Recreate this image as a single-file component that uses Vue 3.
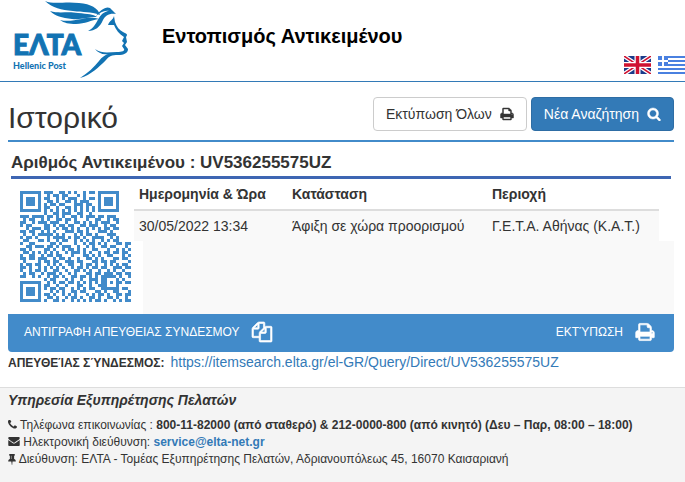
<template>
  <div class="page">
    <!-- Header -->
    <header class="site-header">
      <svg class="logo" viewBox="0 0 130 80" role="img" aria-label="ΕΛΤΑ Hellenic Post">
        <g fill="#1273b3">
          <path d="M45 1C55 5 64 1 79 3C91 4 98 8 100 15C90 11 84 13 73 11C61 10 53 8 45 1Z" />
          <path d="M50 11C60 14 67 11 78 13C88 14 93 14 97 17C87 17 82 20 72 19C62 18 55 16 50 11Z" />
          <path d="M60 20C68 22 74 20 82 19C90 17 95 18 99 19C91 20 85 24 76 24C69 24 64 23 60 20Z" />
          <path d="M96 16C100 10 106 6 110 8L116 14C109 13 105 16 103 20C100 27 95 31 88 31C94 28 96 23 99 18C102 13 106 11 109 11C104 10 100 13 96 16Z" />
          <path d="M108 25C110 20 113 20 114 16L115 22C117 27 119 30 123 32C127 34 128 34 126 37L127 42L125 45L128 49C128 53 124 55 118 55C112 55 109 56 106 60C99 67 91 75 80 78C88 73 94 67 99 61C102 57 105 55 108 54C103 55 98 53 95 49C102 54 109 52 117 52C122 52 125 51 124 49L122 46L124 43L122 41L124 37C119 34 116 30 114 25Z" />
        </g>
        <text class="logo-name" x="13" y="55">ΕΛΤΑ</text>
        <text class="logo-sub" x="13" y="69">Hellenic Post</text>
      </svg>
      <h1 class="site-title">Εντοπισμός Αντικειμένου</h1>
      <nav class="languages">
        <a href="#en" aria-label="English">
          <svg class="flag" viewBox="0 0 27 18">
            <path fill="#1a3a8a" d="M0 0h27v18H0z" />
            <path stroke="#fff" stroke-width="4" d="M0 0L27 18M27 0L0 18" />
            <path stroke="#cf1230" stroke-width="1.500" d="M0 0L27 18M27 0L0 18" />
            <path stroke="#fff" stroke-width="6" d="M13.500 0V18M0 9H27" />
            <path stroke="#cf1230" stroke-width="3.500" d="M13.500 0V18M0 9H27" />
          </svg>
        </a>
        <a href="#el" aria-label="Ελληνικά">
          <svg class="flag" viewBox="0 0 27 18" shape-rendering="crispEdges">
            <path fill="#fff" d="M0 0h27v18H0z" />
            <path fill="#4a80e0" d="M0 0h27v2H0zM0 4h27v2H0zM0 8h27v2H0zM0 12h27v2H0zM0 16h27v2H0z" />
            <path fill="#4a80e0" d="M0 0h10v10H0z" />
            <path fill="#fff" d="M4 0h2v10H4zM0 4h10v2H0z" />
          </svg>
        </a>
      </nav>
    </header>

    <main class="content">
      <!-- Title and actions -->
      <div class="title-row">
        <h2>Ιστορικό</h2>
        <div class="actions">
          <button type="button" class="btn">
            Εκτύπωση Όλων
            <svg class="icon-small" viewBox="0 0 1792 1792"><path :d="icons.print" /></svg>
          </button>
          <button type="button" class="btn btn-primary">
            Νέα Αναζήτηση
            <svg class="icon-small" viewBox="0 0 1792 1792"><path :d="icons.search" /></svg>
          </button>
        </div>
      </div>

      <!-- Item -->
      <h3 class="item-title">Αριθμός Αντικειμένου : {{ itemNumber }}</h3>
      <div class="item-body">
        <svg class="qr" viewBox="0 0 37 37" shape-rendering="crispEdges" role="img" aria-label="QR">
          <path :d="qrPath" />
        </svg>
        <div class="history">
          <table>
            <thead>
              <tr>
                <th class="col-date">Ημερομηνία &amp; Ώρα</th>
                <th class="col-status">Κατάσταση</th>
                <th>Περιοχή</th>
              </tr>
            </thead>
            <tbody>
              <tr v-for="entry in history" :key="entry.date">
                <td>{{ entry.date }}</td>
                <td>{{ entry.status }}</td>
                <td>{{ entry.area }}</td>
              </tr>
            </tbody>
          </table>
          <div class="history-rest"></div>
        </div>
      </div>
      <div class="item-bar">
        <button type="button" class="bar-btn">
          ΑΝΤΙΓΡΑΦΗ ΑΠΕΥΘΕΙΑΣ ΣΥΝΔΕΣΜΟΥ
          <svg class="icon-large" viewBox="0 0 1792 1792"><path :d="icons.copy" /></svg>
        </button>
        <button type="button" class="bar-btn">
          ΕΚΤΎΠΩΣΗ
          <svg class="icon-large" viewBox="0 0 1792 1792"><path :d="icons.print" /></svg>
        </button>
      </div>
      <p class="direct-link">
        <strong>ΑΠΕΥΘΕΊΑΣ ΣΎΝΔΕΣΜΟΣ:</strong>
        <a :href="directUrl">{{ directUrl }}</a>
      </p>
    </main>

    <!-- Customer service -->
    <footer class="site-footer">
      <h4>Υπηρεσία Εξυπηρέτησης Πελατών</h4>
      <p>
        <svg class="icon-phone" viewBox="192 256 1408 1280"><path :d="icons.phone" /></svg>
        Τηλέφωνα επικοινωνίας : <strong>800-11-82000 (από σταθερό) &amp; 212-0000-800 (από κινητό) (Δευ – Παρ, 08:00 – 18:00)</strong>
      </p>
      <p>
        <svg class="icon-mail" viewBox="0 256 1792 1408"><path :d="icons.envelope" /></svg>
        Ηλεκτρονική διεύθυνση: <a href="mailto:service@elta-net.gr"><strong>service@elta-net.gr</strong></a>
      </p>
      <p>
        <svg class="icon-pin" viewBox="320 128 1152 1664"><path :d="icons.pin" /></svg>
        Διεύθυνση: ΕΛΤΑ - Τομέας Εξυπηρέτησης Πελατών, Αδριανουπόλεως 45, 16070 Καισαριανή
      </p>
    </footer>
  </div>
</template>

<script setup>
import { ref, computed } from 'vue';

const itemNumber = ref('UV536255575UZ');

const directUrl = computed(() => `https://itemsearch.elta.gr/el-GR/Query/Direct/${itemNumber.value}`);

// Tracking events of the item
const history = ref([
  { date: '30/05/2022 13:34', status: 'Άφιξη σε χώρα προορισμού', area: 'Γ.Ε.Τ.Α. Αθήνας (Κ.Α.Τ.)' }
]);

// Modules of the QR code, one string per row
const qrRows = [
  '#######.###..##.#.#..#.##.#######....',
  '#.....#..#.##.##...#.#....#.....#....',
  '#.###.#.##..#.#.###..#.##.#.###.#....',
  '#.###.#..##.#..##.#.###...#.###.#....',
  '#.###.#.#.##.##...###.##..#.###.#....',
  '#.....#.##..#..##.#.#.#.#.#.....#....',
  '#######.#.#.#.#.#.#.#.#.#.#######....',
  '........#..##.###..##..#.............',
  '###.####.##.#.#..##.#.###.##.###.....',
  '.#.##..#.#..##.##.#...#..##..#.##....',
  '##..#.###.###..#..##.#.#.#.###..#....',
  '#.##....##.#.##.##..##.###..#.##.....',
  '..#.###.##..#.##.#.#..#.#.#.##.##....',
  '##.##..#.#.#...###.##.#...###.#......',
  '.#..#.#####.#.#...#.#.##.#...###.....',
  '#.##.#...#.####.#.##.#..####..#.#....',
  '.##...##.#..#.##..#.#.#.#..#.#.##....',
  '#..##.....##.#....#..#.##.#.#...##.##',
  '..##.###.##.#.###..#..#.#..##.##...#.',
  '##.#....##.#..#.##.#.#..##...#..#.#.#',
  '.##.#.#.#.#.#..#.###.#.#..#.##.##.##.',
  '#..##..#.##.##...#...##.#.#..##...#.#',
  '##.##.###..#.##.#..#..##.#.#...##.##.',
  '.#....#.##.##..###.##...##.##.##....#',
  '#.##.##..#.#.#..##..#.##.#..#.#.#.##.',
  '##.#..#.#.#.#.#..#.##.#.##.##..###.##',
  '#..#.##.#..##..#..##.#.#..#..#.#..#..',
  '.#.##..#.###.#..#.#...##.##.###.##.##',
  '##..#.#..#.##.#..##.##.#.#.#####.#..#',
  '........#.##...#.#..#..###.##...#.#..',
  '#######..#.#.##.##.#.#.#.#.##.#.##.##',
  '#.....#.##..#..#...##..#..###...#....',
  '#.###.#.#.##.##..#.#.#.##..######.##.',
  '#.###.#...#.#.#..##.##...##.#..##...#',
  '#.###.#.##.#..#.#.#...#.#.##.#..##.##',
  '#.....#..##.#..#.##.#..##.#..##.#..#.',
  '#######.#..##.#..#.#.#.#.##.#..#.#.##'
];

const qrPath = qrRows
  .map((row, y) => [...row].map((cell, x) => (cell === '#' ? `M${x} ${y}h1v1h-1z` : '')).join(''))
  .join('');

const icons = {
  print: 'M448 1536h896v-256h-896v256zm0-640h896v-384h-160q-40 0-68-28t-28-68v-160h-640v640zm1152 64q0-26-19-45t-45-19-45 19-19 45 19 45 45 19 45-19 19-45zm128 0v416q0 13-9.500 22.500t-22.500 9.500h-224v160q0 40-28 68t-68 28h-960q-40 0-68-28t-28-68v-160h-224q-13 0-22.500-9.500t-9.500-22.500v-416q0-79 56.500-135.500t135.500-56.500h64v-544q0-40 28-68t68-28h672q40 0 88 20t76 48l152 152q28 28 48 76t20 88v256h64q79 0 135.500 56.500t56.500 135.500z',
  search: 'M1216 832q0-185-131.500-316.500t-316.500-131.500-316.500 131.500-131.500 316.500 131.500 316.500 316.500 131.500 316.500-131.500 131.500-316.500zm512 832q0 52-38 90t-90 38q-54 0-90-38l-343-342q-179 124-399 124-143 0-273.500-55.500t-225-150-150-225-55.500-273.500 55.500-273.500 150-225 225-150 273.500-55.500 273.500 55.500 225 150 150 225 55.500 273.500q0 220-124 399l343 343q37 37 37 90z',
  copy: 'M1696 384q40 0 68 28t28 68v1216q0 40-28 68t-68 28h-960q-40 0-68-28t-28-68v-288h-544q-40 0-68-28t-28-68v-672q0-40 20-88t48-76l408-408q28-28 76-48t88-20h416q40 0 68 28t28 68v328q68-40 128-40h416zm-544 213l-299 299h299v-299zm-640-384l-299 299h299v-299zm196 647l316-316v-416h-384v416q0 40-28 68t-68 28h-416v640h512v-256q0-40 20-88t48-76zm956 804v-1152h-384v416q0 40-28 68t-68 28h-416v640h896z',
  phone: 'M1600 1240q0 27-10 70.500t-21 68.500q-21 50-122 106-94 51-186 51-27 0-53-3.500t-57.500-12.500-47-14.500-55.500-20.500-49-18q-98-35-175-83-127-79-264-216t-216-264q-48-77-83-175-3-9-18-49t-20.500-55.500-14.500-47-12.500-57.500-3.500-53q0-92 51-186 56-101 106-122 25-11 68.500-21t70.500-10q14 0 21 3 18 6 53 76 11 19 30 54t35 63.500 31 53.500q3 4 17.500 25t21.500 35.500 7 28.500q0 20-28.500 50t-62 55-62 53-28.500 46q0 9 5 22.500t8.500 20.500 14 24 11.500 19q76 137 174 235t235 174q2 1 19 11.500t24 14 20.500 8.500 22.500 5q18 0 46-28.500t53-62 55-62 50-28.500q14 0 28.500 7t35.500 21.500 25 17.500q25 15 53.500 31t63.500 35 54 30q70 35 76 53 3 7 3 21z',
  envelope: 'M1792 710v794q0 66-47 113t-113 47h-1472q-66 0-113-47t-47-113v-794q44 49 101 87 362 246 497 345 57 42 92.500 65.500t94.500 48 110 24.500h2q51 0 110-24.500t94.500-48 92.500-65.500q170-123 498-345 57-39 100-87zm0-294q0 79-49 151t-122 123q-376 261-468 325-10 7-42.500 31t-54 38.500-52 32.500-57.500 27-50 9h-2q-23 0-50-9t-57.500-27-52-32.500-54-38.500-42.500-31q-91-64-262-182.500t-205-142.500q-62-42-117-115.500t-55-136.500q0-78 41.500-130t118.500-52h1472q65 0 112.500 47t47.500 113z',
  pin: 'M800 864v-448q0-14-9-23t-23-9-23 9-9 23v448q0 14 9 23t23 9 23-9 9-23zm672 352q0 26-19 45t-45 19h-429l-51 483q-2 12-10.500 20.500t-20.500 8.500h-1q-27 0-32-27l-76-485h-404q-26 0-45-19t-19-45q0-123 78.500-221.500t177.500-98.500v-512q-52 0-90-38t-38-90 38-90 90-38h640q52 0 90 38t38 90-38 90-90 38v512q99 0 177.500 98.500t78.500 221.500z'
};
</script>

<style>
body {
  background-color: #fff;
}
</style>

<style scoped>
.page {
  display: flex;
  flex-direction: column;
  min-height: 100vh;
  font-family: "Liberation Sans", Arial, sans-serif;
  font-size: 14px;
  line-height: 20px;
  color: #333;
}

h1, h2, h3, h4, p {
  margin: 0;
}

a {
  color: #337ab7;
  text-decoration: none;
}

button {
  font-family: inherit;
  cursor: pointer;
}

/* Header */
.site-header {
  display: flex;
  height: 81px;
  border-bottom: 1px solid #337ab7;
}

.logo {
  width: 130px;
  height: 80px;
  margin-right: 32px;
}

.logo-name {
  font: 900 28px Lato, sans-serif;
  fill: #1273b3;
  stroke: #1273b3;
  stroke-width: 1px;
}

.logo-sub {
  font: 900 9px Lato, sans-serif;
  fill: #1273b3;
}

.site-title {
  flex: 1;
  padding-top: 24px;
  font-size: 20px;
  line-height: 24px;
  color: #000;
}

.languages {
  display: flex;
  align-items: flex-end;
  gap: 7px;
  padding-bottom: 7px;
}

.flag {
  display: block;
  width: 27px;
  height: 18px;
}

/* Title and actions */
.content {
  padding: 15px 11px 14px 8px;
}

.title-row {
  display: flex;
  justify-content: space-between;
  padding-bottom: 7px;
  border-bottom: 2px solid #428bca;
}

.title-row h2 {
  padding-top: 6px;
  font-size: 30px;
  font-weight: 400;
  line-height: 30px;
}

.actions {
  display: flex;
  align-items: flex-start;
  gap: 4px;
}

.btn {
  display: flex;
  align-items: center;
  gap: 8px;
  height: 34px;
  padding: 0 12px;
  border: 1px solid #ccc;
  border-radius: 4px;
  background-color: #fff;
  color: #333;
  font-size: 14px;
}

.btn-primary {
  border-color: #2e6da4;
  background-color: #337ab7;
  color: #fff;
}

.icon-small,
.icon-large {
  fill: currentColor;
  stroke: currentColor;
  stroke-width: 60;
}

.icon-small {
  width: 14px;
  height: 14px;
}

.icon-large {
  width: 20px;
  height: 20px;
  overflow: visible;
}

/* Item */
.item-title {
  margin: 0 3px;
  padding: 11px 0 3px;
  border-bottom: 3px solid #3e66b3;
  font-size: 17px;
  line-height: 20px;
}

.item-body {
  display: flex;
  min-height: 135px;
}

.qr {
  flex: none;
  width: 111px;
  height: 111px;
  margin: 12px 3px 12px 12px;
  fill: #428bca;
}

.history {
  flex: 1;
  display: flex;
  flex-direction: column;
}

.history table {
  margin-right: 15px;
  border-collapse: collapse;
}

.history th {
  padding: 5px;
  border-bottom: 2px solid #ddd;
  text-align: left;
}

.history td {
  padding: 5px;
  background-color: #f9f9f9;
}

.col-date {
  width: 143px;
}

.col-status {
  width: 190px;
}

.history-rest {
  flex: 1;
  margin-left: 9px;
  background-color: #f9f9f9;
}

.item-bar {
  display: flex;
  justify-content: space-between;
  padding: 0 19px 0 16px;
  border-radius: 0 0 4px 4px;
  background-color: #428bca;
}

.bar-btn {
  display: flex;
  align-items: center;
  gap: 12px;
  height: 38px;
  padding: 0 0 3px;
  border: 0;
  background: none;
  color: #fff;
  font-size: 12px;
}

.direct-link strong {
  margin-right: 6px;
  font-size: 12px;
}

/* Customer service */
.site-footer {
  flex: 1;
  padding: 2px 8px;
  border-top: 1px solid #ddd;
  background-color: #f4f4f4;
  font-size: 12px;
  line-height: 17px;
}

.site-footer h4 {
  margin-bottom: 7px;
  font-size: 14px;
  font-style: italic;
  line-height: 20px;
}

.icon-phone {
  width: 9px;
  height: 9px;
  fill: #333;
}

.icon-mail {
  width: 12px;
  height: 9px;
  fill: #333;
}

.icon-pin {
  width: 8px;
  height: 11px;
  vertical-align: middle;
  fill: #333;
}
</style>
